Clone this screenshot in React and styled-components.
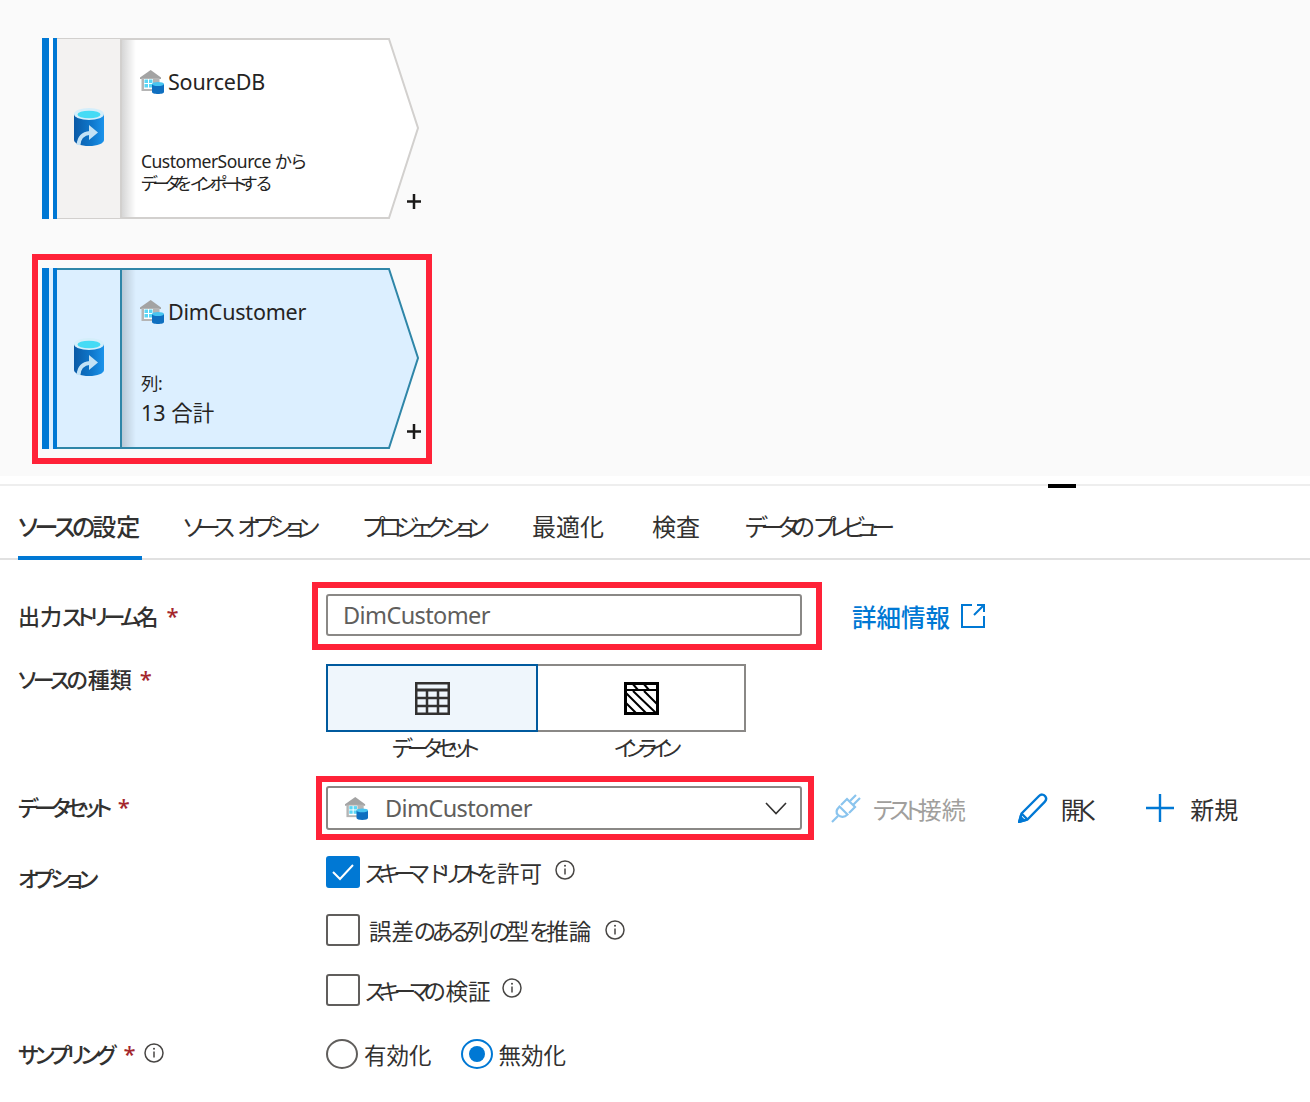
import React from 'react';
import styled, { createGlobalStyle } from 'styled-components';

const GlobalStyle = createGlobalStyle`
  html, body { margin: 0; padding: 0; background: #fff; }
  body {
    font-family: "Noto Sans", "Noto Sans CJK JP", sans-serif;
    font-feature-settings: "palt";
    color: #323130;
  }
`;

const Page = styled.div`
  width: 1310px;
  height: 1102px;
  position: relative;
  overflow: hidden;
  background: #fff;
`;

const Canvas = styled.div`
  height: 476px;
  box-sizing: border-box;
  background: #fafafa;
  padding: 38px 0 0 42px;
  margin-bottom: 8px;
`;

const NodeHighlight = styled.div`
  width: 400px;
  height: 210px;
  box-sizing: border-box;
  margin: 35px 0 0 -10px;
  border: 6px solid #ff2238;
  padding: 8px 0 0 4px;
`;

const NodeBox = styled.div`
  position: relative;
  display: flex;
  width: 377px;
  height: 181px;
`;

const NodeShape = styled.svg`
  position: absolute;
  inset: 0;
  polygon {
    fill: ${p => (p.$selected ? '#dcefff' : '#fff')};
    stroke: ${p => (p.$selected ? '#2f86a8' : '#d2d0ce')};
    stroke-width: 2px;
  }
`;

const Bars = styled.div`
  position: relative;
  display: flex;
  gap: 4px;
  width: 15px;
  background: ${p => (p.$selected ? '#dcefff' : '#fff')};
`;

const Bar = styled.div`
  width: ${p => p.$w}px;
  background: #0078d4;
`;

const IconCell = styled.div`
  position: relative;
  width: 65px;
  flex: none;
  box-sizing: border-box;
  display: flex;
  align-items: center;
  justify-content: center;
  padding: 0 0 3px 1px;
  background: ${p => (p.$selected ? '#dcefff' : '#f3f2f1')};
  border: solid ${p => (p.$selected ? '#2f86a8' : '#d2d0ce')};
  border-width: ${p => (p.$selected ? '2px 2px 2px 0' : '1px 2px 1px 0')};
`;

const NodeBody = styled.div`
  position: relative;
  flex: 1;
  display: flex;
  flex-direction: column;
  justify-content: space-between;
  padding: 30px 0 25px 18px;
  &::before {
    content: '';
    position: absolute;
    left: 0;
    top: 2px;
    bottom: 2px;
    width: 14px;
    background: linear-gradient(to right, rgba(0, 0, 0, 0.16), rgba(0, 0, 0, 0));
  }
`;

const NodeTitle = styled.div`
  display: flex;
  align-items: center;
  gap: 4px;
  height: 27px;
  font-size: 21.5px;
  letter-spacing: -0.2px;
  color: #252423;
`;

const NodeNote = styled.div`
  font-size: 17.5px;
  line-height: 22px;
  margin-left: 1px;
  color: #252423;
  letter-spacing: -0.5px;
  white-space: nowrap;
`;

const ColumnCount = styled.div`
  font-size: 21.5px;
  line-height: 30px;
  color: #252423;
  margin: 4px 0 -4px 1px;
`;

const PlusMark = styled.svg`
  position: absolute;
  right: -2px;
  bottom: 10px;
`;

const Panel = styled.div`
  position: relative;
  border-top: 2px solid #eeeeee;
`;

const Handle = styled.div`
  position: absolute;
  left: 1048px;
  top: -2px;
  width: 28px;
  height: 4px;
  background: #000;
`;

const TabBar = styled.div`
  display: flex;
  height: 74px;
  box-sizing: border-box;
  padding-left: 18px;
  border-bottom: 2px solid #e1e1e1;
`;

const Tab = styled.div`
  position: relative;
  width: ${p => p.$w}px;
  margin-right: ${p => p.$gap}px;
  font-size: 24px;
  line-height: 34px;
  padding-top: 24px;
  white-space: nowrap;
  color: #323130;
  font-weight: ${p => (p.$active ? 500 : 400)};
  word-spacing: ${p => p.$ws || 0}px;
  ${p =>
    p.$active &&
    `&::after {
      content: '';
      position: absolute;
      left: 0;
      right: -2px;
      bottom: -2px;
      height: 4px;
      background: #0078d4;
    }`}
`;

/* kana run: the reference's UI font sets kana much tighter than kanji */
const Kana = styled.span`
  letter-spacing: ${p => p.$ls}px;
`;

const Form = styled.div`
  padding: 22px 0 0 18px;
`;

const Row = styled.div`
  display: grid;
  grid-template-columns: 308px 1fr;
  margin-bottom: ${p => p.$mb || 0}px;
`;

const Label = styled.div`
  display: flex;
  align-items: center;
  align-self: start;
  height: ${p => p.$h || 32}px;
  margin-top: ${p => p.$mt || 0}px;
  font-size: 22px;
  font-weight: 500;
  color: #323130;
  white-space: nowrap;
`;

const Required = styled.span`
  color: #a4262c;
  margin-left: ${p => p.$ml || 8}px;
`;

const ControlLine = styled.div`
  display: flex;
  align-items: center;
`;

const RedFrame = styled.div`
  box-sizing: border-box;
  border: 6px solid #ff2238;
  width: ${p => p.$w}px;
  margin-left: ${p => -p.$pl - 6}px;
  padding: ${p => p.$pt}px ${p => p.$pr}px ${p => p.$pb}px ${p => p.$pl}px;
`;

const TextBox = styled.div`
  display: flex;
  align-items: center;
  box-sizing: border-box;
  height: ${p => p.$h}px;
  border: 2px solid #8a8886;
  border-radius: 3px;
  padding-left: ${p => p.$pl}px;
  padding-right: 13px;
  font-size: 23.5px;
  letter-spacing: -0.6px;
  color: #605e5c;
  background: #fff;
`;

const LinkText = styled.a`
  display: flex;
  align-items: center;
  gap: 11px;
  margin-left: 30px;
  font-size: 24.5px;
  font-weight: 500;
  color: #0078d4;
  text-decoration: none;
`;

const Segments = styled.div`
  display: flex;
  width: 420px;
`;

const SegmentCol = styled.div`
  width: ${p => p.$w}px;
  text-align: center;
  font-size: 22px;
  line-height: 30px;
  letter-spacing: ${p => p.$ls}px;
  color: #323130;
`;

const Segment = styled.div`
  box-sizing: border-box;
  height: 68px;
  display: flex;
  align-items: center;
  justify-content: center;
  background: ${p => (p.$active ? '#eff6fc' : '#fff')};
  border: 2px solid ${p => (p.$active ? '#005a9e' : '#8a8886')};
  ${p => !p.$active && 'border-left: none;'}
`;

const Caption = styled.div`
  padding-left: ${p => p.$shift}px;
`;

const SelectText = styled.span`
  flex: 1;
  margin-left: 17px;
`;

const Actions = styled.div`
  display: flex;
  align-items: center;
  margin-left: 17px;
`;

const Action = styled.div`
  display: flex;
  align-items: center;
  gap: ${p => p.$gap}px;
  margin-right: ${p => p.$mr || 0}px;
  font-size: 24px;
  color: ${p => (p.$disabled ? '#a19f9d' : '#323130')};
`;

const OptionList = styled.div`
  display: flex;
  flex-direction: column;
`;

const OptionItem = styled.div`
  display: flex;
  align-items: center;
  height: 32px;
  margin-bottom: ${p => p.$mb || 0}px;
  font-size: 22.5px;
  color: #323130;
  word-spacing: 8px;
  white-space: nowrap;
`;

const Check = styled.div`
  box-sizing: border-box;
  flex: none;
  width: 34px;
  height: 32px;
  margin-right: ${p => p.$mr}px;
  display: flex;
  align-items: center;
  justify-content: center;
  border-radius: 3px;
  border: 2px solid ${p => (p.$on ? '#0078d4' : '#605e5c')};
  background: ${p => (p.$on ? '#0078d4' : '#fff')};
`;

const InfoIcon = styled.svg`
  flex: none;
  margin-left: ${p => p.$ml}px;
  margin-top: ${p => p.$mt || 0}px;
`;

const RadioGroup = styled.div`
  display: flex;
  align-items: center;
  height: 30px;
  font-size: 22.5px;
  color: #323130;
`;

const Radio = styled.div`
  box-sizing: border-box;
  width: 32px;
  height: 30px;
  margin-right: 6px;
  border-radius: 50%;
  border: 2px solid ${p => (p.$on ? '#0078d4' : '#605e5c')};
  display: flex;
  align-items: center;
  justify-content: center;
  &::after {
    content: '';
    display: ${p => (p.$on ? 'block' : 'none')};
    width: 16px;
    height: 16px;
    border-radius: 50%;
    background: #0078d4;
  }
`;

const RadioText = styled.span`
  margin-right: ${p => p.$mr || 0}px;
`;

function DbImportIcon() {
  return (
    <svg width="30" height="38" viewBox="0 0 30 38">
      <defs>
        <linearGradient id="dbBody" x1="0" y1="0" x2="1" y2="0">
          <stop offset="0" stopColor="#0a5aa6" />
          <stop offset="0.6" stopColor="#0f78cc" />
          <stop offset="1" stopColor="#1b93eb" />
        </linearGradient>
      </defs>
      <path d="M0 6v26c0 3.4 6.7 6 15 6s15-2.600 15-6V6z" fill="url(#dbBody)" />
      <ellipse cx="15" cy="6" rx="15" ry="6" fill="#d4eefa" />
      <ellipse cx="15" cy="6.500" rx="11.500" ry="3.800" fill="#45dbf5" />
      <path d="M4.500 37C5 29.500 9 25.500 16 24.800" fill="none" stroke="#c3e2f5" strokeWidth="3.800" />
      <polygon points="15,17 24,24.500 15,32" fill="#c3e2f5" />
    </svg>
  );
}

function WarehouseIcon({ size = 24 }) {
  return (
    <svg width={size} height={size} viewBox="0 0 24 24">
      <polygon points="10.700,0 0,7.500 0,9 21,9 21,7.500" fill="#a3a3a3" />
      <rect x="1.500" y="8" width="18" height="13" fill="#b5b5b5" />
      <rect x="4" y="9" width="9" height="10" fill="#fff" />
      <rect x="4.500" y="9.500" width="3.500" height="3.500" fill="#5ad6f5" />
      <rect x="9" y="9.500" width="3.500" height="3.500" fill="#5ad6f5" />
      <rect x="4.500" y="14" width="3.500" height="3.500" fill="#5ad6f5" />
      <rect x="9" y="14" width="3.500" height="3.500" fill="#5ad6f5" />
      <path d="M12 14v8c0 1.200 2.700 2 6 2s6-.8 6-2v-8z" fill="#0f6fc0" />
      <ellipse cx="18" cy="14" rx="6" ry="2" fill="#49c5f1" />
    </svg>
  );
}

function Node({ selected, title, children }) {
  return (
    <NodeBox>
      <NodeShape $selected={selected} width="377" height="181" viewBox="0 0 377 181">
        <polygon points="1,1 347,1 376,90 347,180 1,180" />
      </NodeShape>
      <Bars $selected={selected}>
        <Bar $w={7} />
        <Bar $w={4} />
      </Bars>
      <IconCell $selected={selected}>
        <DbImportIcon />
      </IconCell>
      <NodeBody>
        <NodeTitle>
          <WarehouseIcon />
          {title}
        </NodeTitle>
        <div>{children}</div>
      </NodeBody>
      <PlusMark width="14" height="15" viewBox="0 0 14 15">
        <path d="M7 0v15M0 7.500h14" stroke="#1b1a19" strokeWidth="2.500" />
      </PlusMark>
    </NodeBox>
  );
}

function Info({ ml, mt }) {
  return (
    <InfoIcon $ml={ml} $mt={mt} width="20" height="20" viewBox="0 0 20 20">
      <circle cx="10" cy="10" r="9" fill="none" stroke="#484644" strokeWidth="1.500" />
      <path d="M10 8.500v6" stroke="#484644" strokeWidth="1.500" />
      <circle cx="10" cy="5.800" r="1" fill="#484644" />
    </InfoIcon>
  );
}

function TableIcon() {
  return (
    <svg width="35" height="33" viewBox="0 0 35 33">
      <rect x="1.250" y="1.250" width="32.500" height="30.500" fill="none" stroke="#323130" strokeWidth="2.500" />
      <path d="M1 8h33" stroke="#323130" strokeWidth="3" />
      <path d="M1 16h33M1 24h33M12 8v24M23 8v24" stroke="#323130" strokeWidth="2.500" />
    </svg>
  );
}

function InlineIcon() {
  return (
    <svg width="35" height="33" viewBox="0 0 35 33">
      <rect x="1.500" y="1.500" width="32" height="30" fill="none" stroke="#000" strokeWidth="3" />
      <path d="M1 8h33" stroke="#000" strokeWidth="2" />
      <path d="M2 11l20 20M9 9l23 22M20 9l14 14M2 21l10 10M8 1l6 7M19 1l6 7" stroke="#000" strokeWidth="2" />
    </svg>
  );
}

function ExternalIcon() {
  return (
    <svg width="24" height="24" viewBox="0 0 24 24" fill="none" stroke="#0078d4" strokeWidth="2">
      <path d="M11 1H1v22h22V12" />
      <path d="M23 1L13 11M16 1h7v7" />
    </svg>
  );
}

function PlugIcon() {
  return (
    <svg width="30" height="30" viewBox="0 0 30 30" fill="none" stroke="#8ac4ee" strokeWidth="2.200">
      <path d="M1 29l6-6" />
      <path d="M8.500 13.500l8 8c-3 3-7 3-9.500.5s-1.500-5.500 1.500-8.500z" />
      <path d="M10 12l6-6 8 8-6 6" />
      <path d="M19 8l6-6M22 12l7-7" />
    </svg>
  );
}

function PenIcon() {
  return (
    <svg width="30" height="30" viewBox="0 0 30 30" fill="none" stroke="#0078d4" strokeWidth="2.400">
      <path d="M1.500 28.500l2-8L21 3c2-2 4.500-1.800 6 0s1.500 4-.3 5.800L9.500 26.500z" strokeLinejoin="round" />
      <path d="M3.500 20.500l6 6" />
      <path d="M1 29l5-1.500L2.500 24z" fill="#0078d4" />
    </svg>
  );
}

function AddIcon() {
  return (
    <svg width="28" height="28" viewBox="0 0 28 28">
      <path d="M14 0v28M0 14h28" stroke="#0078d4" strokeWidth="2.400" />
    </svg>
  );
}

const tabs = [
  { key: 'settings', w: 122, gap: 43, active: true, label: <><Kana $ls={-3.2}>ソースの</Kana>設定</> },
  { key: 'options', w: 136, gap: 44, ws: 8, label: <Kana $ls={-5.9}>ソース オプション</Kana> },
  { key: 'projection', w: 124, gap: 45, label: <Kana $ls={-6.5}>プロジェクション</Kana> },
  { key: 'optimize', w: 73, gap: 47, label: '最適化' },
  { key: 'inspect', w: 49, gap: 44, label: '検査' },
  {
    key: 'preview',
    w: 147,
    gap: 0,
    label: (
      <>
        <Kana $ls={-6.8}>データ</Kana>
        <Kana $ls={-1}>の</Kana>
        <Kana $ls={-7}>プレビュー</Kana>
      </>
    ),
  },
];

export default function App() {
  return (
    <Page>
      <GlobalStyle />
      <Canvas>
        <Node title="SourceDB">
          <NodeNote>CustomerSource から</NodeNote>
          <NodeNote>
            <Kana $ls={-5}>データ</Kana>
            <Kana $ls={-1}>を</Kana>
            <Kana $ls={-5.5}>インポート</Kana>
            <Kana $ls={-1}>する</Kana>
          </NodeNote>
        </Node>
        <NodeHighlight>
          <Node selected title="DimCustomer">
            <NodeNote>列:</NodeNote>
            <ColumnCount>13 合計</ColumnCount>
          </Node>
        </NodeHighlight>
      </Canvas>
      <Panel>
        <Handle />
        <TabBar>
          {tabs.map(t => (
            <Tab key={t.key} $w={t.w} $gap={t.gap} $ws={t.ws} $active={t.active}>
              {t.label}
            </Tab>
          ))}
        </TabBar>
        <Form>
          <Row $mb={14}>
            <Label $mt={17}>
              <span>出力<Kana $ls={-4.4}>ストリーム</Kana>名</span>
              <Required>*</Required>
            </Label>
            <ControlLine>
              <RedFrame $w={510} $pl={8} $pr={14} $pt={6} $pb={8}>
                <TextBox $h={42} $pl={15}>DimCustomer</TextBox>
              </RedFrame>
              <LinkText href="#">
                詳細情報
                <ExternalIcon />
              </LinkText>
            </ControlLine>
          </Row>
          <Row $mb={14}>
            <Label $mt={-2}>
              <span><Kana $ls={-3.3}>ソース</Kana>の種類</span>
              <Required>*</Required>
            </Label>
            <Segments>
              <SegmentCol $w={212} $ls={-5.8}>
                <Segment $active>
                  <TableIcon />
                </Segment>
                <Caption $shift={2}>データセット</Caption>
              </SegmentCol>
              <SegmentCol $w={208} $ls={-7.4}>
                <Segment>
                  <InlineIcon />
                </Segment>
                <Caption $shift={4}>インライン</Caption>
              </SegmentCol>
            </Segments>
          </Row>
          <Row $mb={16}>
            <Label $mt={14}>
              <Kana $ls={-4.5}>データセット</Kana>
              <Required $ml={10}>*</Required>
            </Label>
            <ControlLine>
              <RedFrame $w={498} $pl={4} $pr={6} $pt={4} $pb={4}>
                <TextBox $h={44} $pl={17}>
                  <WarehouseIcon size={23} />
                  <SelectText>DimCustomer</SelectText>
                  <svg width="22" height="13" viewBox="0 0 22 13">
                    <path d="M1 1l10 10.500L21 1" fill="none" stroke="#323130" strokeWidth="1.600" />
                  </svg>
                </TextBox>
              </RedFrame>
              <Actions>
                <Action $disabled $gap={12} $mr={52}>
                  <PlugIcon />
                  <span><Kana $ls={-5.7}>テスト</Kana>接続</span>
                </Action>
                <Action $gap={13} $mr={49}>
                  <PenIcon />
                  <span><Kana $ls={-4}>開</Kana>く</span>
                </Action>
                <Action $gap={16}>
                  <AddIcon />
                  新規
                </Action>
              </Actions>
            </ControlLine>
          </Row>
          <Row $mb={33}>
            <Label $mt={5}>
              <Kana $ls={-4.1}>オプション</Kana>
            </Label>
            <OptionList>
              <OptionItem $mb={26}>
                <Check $on $mr={5}>
                  <svg width="22" height="18" viewBox="0 0 22 18">
                    <path d="M1 9l7 7L21 2" fill="none" stroke="#fff" strokeWidth="2" />
                  </svg>
                </Check>
                <span><Kana $ls={-6.5}>スキーマ ドリフト</Kana>を許可</span>
                <Info ml={13} mt={-4} />
              </OptionItem>
              <OptionItem $mb={28}>
                <Check $mr={9} />
                <span>誤差<Kana $ls={-3.8}>のある</Kana>列<Kana $ls={-3.8}>の</Kana>型<Kana $ls={-3.8}>を</Kana>推論</span>
                <Info ml={14} mt={0} />
              </OptionItem>
              <OptionItem>
                <Check $mr={5} />
                <span><Kana $ls={-6.2}>スキーマ</Kana>の検証</span>
                <Info ml={11} mt={-4} />
              </OptionItem>
            </OptionList>
          </Row>
          <Row>
            <Label $h={28}>
              <Kana $ls={-3.8}>サンプリング</Kana>
              <Required $ml={11}>*</Required>
              <Info ml={8} mt={-1} />
            </Label>
            <RadioGroup>
              <Radio />
              <RadioText $mr={29}>有効化</RadioText>
              <Radio $on />
              <RadioText>無効化</RadioText>
            </RadioGroup>
          </Row>
        </Form>
      </Panel>
    </Page>
  );
}
